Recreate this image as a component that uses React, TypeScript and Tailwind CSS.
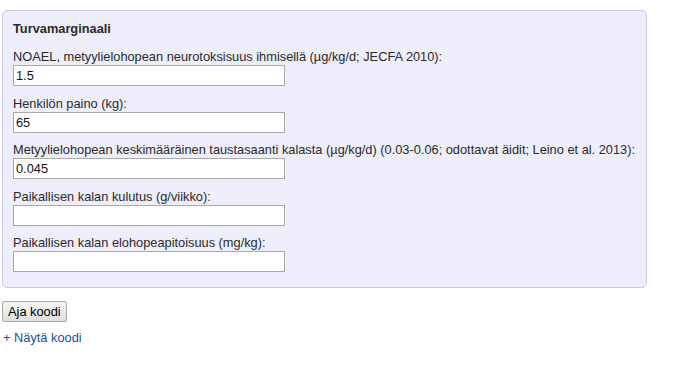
const FIELDS = [
  { label: 'NOAEL, metyylielohopean neurotoksisuus ihmisellä (µg/kg/d; JECFA 2010):', value: '1.5' },
  { label: 'Henkilön paino (kg):', value: '65' },
  {
    label:
      'Metyylielohopean keskimääräinen taustasaanti kalasta (µg/kg/d) (0.03-0.06; odottavat äidit; Leino et al. 2013):',
    value: '0.045',
  },
  { label: 'Paikallisen kalan kulutus (g/viikko):', value: '' },
  { label: 'Paikallisen kalan elohopeapitoisuus (mg/kg):', value: '' },
]

export default function App() {
  return (
    <div className="w-[679px] h-[368px] bg-white text-[12.8px] text-[#2a2a2a] font-['Liberation_Sans',Arial,sans-serif]">
      <div className="h-[10px]" />
      {/* Form panel */}
      <div className="ml-[2px] w-[645px] rounded-[5px] border border-[#c9c9ea] bg-[#eeeefb] pl-[10px] pt-[10px] pb-[15px]">
        <div className="font-bold leading-[16px] mb-[12px]">Turvamarginaali</div>
        {FIELDS.map((f, i) => (
          <div key={i} className={i < FIELDS.length - 1 ? 'mb-[9.5px]' : ''}>
            <div className="leading-[16px]">{f.label}</div>
            <input
              type="text"
              defaultValue={f.value}
              className="block w-[272px] h-[21px] border border-[#a9a9a9] bg-white px-[2px] text-[12.8px] text-[#111] outline-none"
            />
          </div>
        ))}
      </div>

      <div className="ml-[2px] mt-[13px]">
        <button className="h-[21px] px-[5px] border border-[#a7a7a7] rounded-[2px] bg-gradient-to-b from-[#f6f6f6] to-[#dedede] text-[12.8px] text-black leading-[19px]">
          Aja koodi
        </button>
      </div>
      <div className="ml-[3px] mt-[8px] leading-[16px]">
        <a href="#" className="text-[#1d4f9a] no-underline">
          + Näytä koodi
        </a>
      </div>
    </div>
  )
}
